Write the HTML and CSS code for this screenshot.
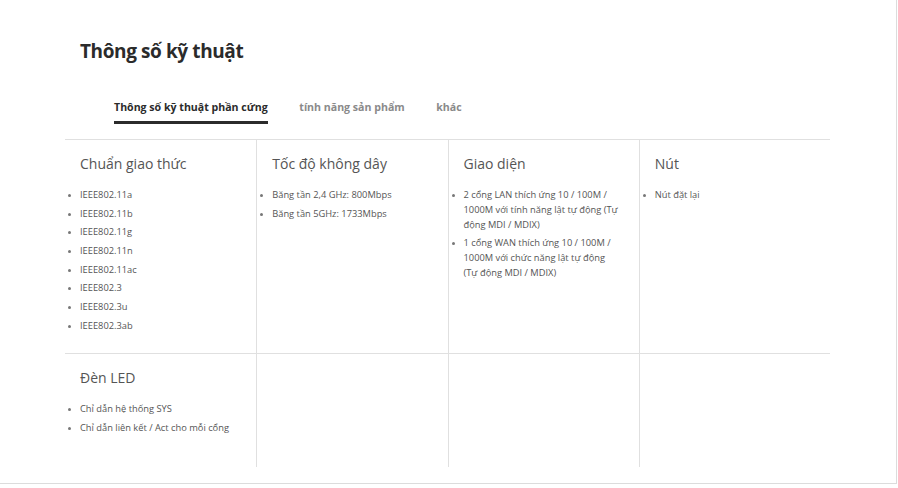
FILE: index.html
```html
<!DOCTYPE html>
<html lang="vi">
<head>
<meta charset="utf-8">
<title>Thông số kỹ thuật</title>
<link rel="stylesheet" href="styles.css">
</head>
<body>
<div class="page">
  <h1 class="title">Thông số kỹ thuật</h1>
  <nav class="tabs">
    <span class="tab active">Thông số kỹ thuật phần cứng</span>
    <span class="tab">tính năng sản phẩm</span>
    <span class="tab">khác</span>
  </nav>
  <div class="specs">
    <section class="cell">
      <h2 class="cell-title">Chuẩn giao thức</h2>
      <ul class="items">
        <li>IEEE802.11a</li>
        <li>IEEE802.11b</li>
        <li>IEEE802.11g</li>
        <li>IEEE802.11n</li>
        <li>IEEE802.11ac</li>
        <li>IEEE802.3</li>
        <li>IEEE802.3u</li>
        <li>IEEE802.3ab</li>
      </ul>
    </section>
    <section class="cell">
      <h2 class="cell-title">Tốc độ không dây</h2>
      <ul class="items">
        <li>Băng tần 2,4 GHz: 800Mbps</li>
        <li>Băng tần 5GHz: 1733Mbps</li>
      </ul>
    </section>
    <section class="cell">
      <h2 class="cell-title">Giao diện</h2>
      <ul class="items">
        <li>2 cổng LAN thích ứng 10 / 100M / 1000M với tính năng lật tự động (Tự động MDI / MDIX)</li>
        <li>1 cổng WAN thích ứng 10 / 100M / 1000M với chức năng lật tự động (Tự động MDI / MDIX)</li>
      </ul>
    </section>
    <section class="cell">
      <h2 class="cell-title">Nút</h2>
      <ul class="items">
        <li>Nút đặt lại</li>
      </ul>
    </section>
    <section class="cell">
      <h2 class="cell-title">Đèn LED</h2>
      <ul class="items">
        <li>Chỉ dẫn hệ thống SYS</li>
        <li>Chỉ dẫn liên kết / Act cho mỗi cổng</li>
      </ul>
    </section>
    <section class="cell"></section>
    <section class="cell"></section>
    <section class="cell"></section>
  </div>
</div>
</body>
</html>
```

FILE: styles.css
```css
* { box-sizing: border-box; }

html, body {
  margin: 0;
  padding: 0;
  background: #ffffff;
}

body {
  font-family: "Open Sans", "Noto Sans", sans-serif;
  color: #333333;
}

.page {
  width: 897px;
  height: 484px;
  border-right: 1px solid #dcdcdc;
  border-bottom: 1px solid #dcdcdc;
  padding-top: 37px;
  overflow: hidden;
}

.title {
  margin: 0 0 0 80px;
  font-size: 19px;
  line-height: 28px;
  font-weight: 700;
  color: #2b2b2b;
  letter-spacing: -0.4px;
}

.tabs {
  display: flex;
  gap: 31.5px;
  margin: 34px 0 0 114px;
}

.tab {
  font-size: 10.6px;
  line-height: 16px;
  font-weight: 700;
  color: #8a8a8a;
  padding-bottom: 6px;
  border-bottom: 3px solid transparent;
}

.tab.active {
  color: #2b2b2b;
  border-bottom-color: #2b2b2b;
}

.specs {
  display: grid;
  grid-template-columns: repeat(4, 1fr);
  grid-template-rows: 214px 114px;
  width: 765px;
  margin: 15px 0 0 65px;
}

.cell {
  border-top: 1px solid #e0e0e0;
  padding: 12px 20px 0 15px;
}

.cell:not(:nth-child(4n+1)) {
  border-left: 1px solid #e0e0e0;
}

.cell-title {
  margin: 0 0 12px;
  font-size: 14px;
  line-height: 24px;
  font-weight: 400;
  color: #555555;
}

.items {
  list-style: none;
  margin: 0;
  padding: 0;
}

.items li {
  display: flex;
  align-items: flex-start;
  font-size: 9.3px;
  line-height: 14.8px;
  margin-bottom: 3.9px;
  color: #555555;
}

.items li::before {
  content: "";
  flex: 0 0 3px;
  width: 3px;
  height: 3px;
  border-radius: 50%;
  background: #777777;
  margin: 6px 9px 0 -12px;
}
```
